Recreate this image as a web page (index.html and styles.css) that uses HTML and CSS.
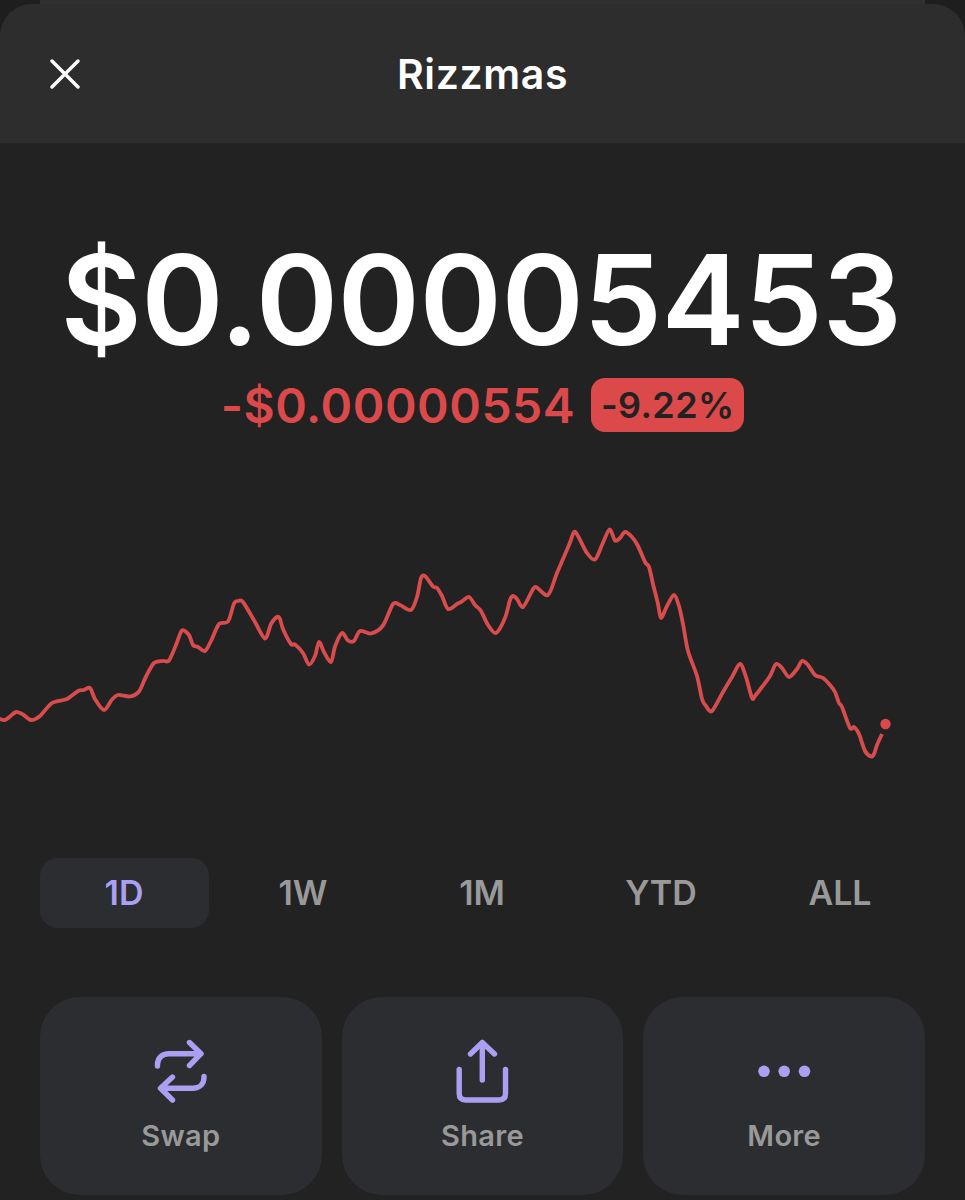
FILE: index.html
```html
<!DOCTYPE html>
<html lang="en">
<head>
  <meta charset="UTF-8" />
  <meta name="viewport" content="width=device-width, initial-scale=1.0"/>
  <title>Rizzmas</title>
  <link rel="stylesheet" href="styles.css">
</head>
<body>
  <div class="peek"></div>
  <div class="sheet">
    <!-- Header -->
    <header class="header">
      <button class="close-btn" aria-label="Close">
        <svg width="30" height="30" viewBox="0 0 30 30"><path d="M2 2L28 28M28 2L2 28"/></svg>
      </button>
      <h1 class="title">Rizzmas</h1>
    </header>

    <!-- Price -->
    <div class="price">$0.00005453</div>
    <div class="change-row">
      <span class="change">-$0.00000554</span>
      <span class="badge">-9.22%</span>
    </div>

    <!-- Chart -->
    <svg class="chart" viewBox="0 500 965 300">
      <path id="chartLine"/>
      <circle cx="885.5" cy="724" r="5.2"/>
    </svg>

    <!-- Time range -->
    <nav class="tabs">
      <button class="tab active">1D</button>
      <button class="tab">1W</button>
      <button class="tab">1M</button>
      <button class="tab">YTD</button>
      <button class="tab">ALL</button>
    </nav>

    <!-- Actions -->
    <div class="actions">
      <button class="action">
        <svg class="icon" viewBox="0 0 64 64">
          <path d="M8.500 27V25.500C8.500 19 13 14.700 20 14.700H52M40.500 3.500L52 14.700L40.500 26.500M55 37.500V38.500C55 45 50.500 49.300 43.500 49.300H12M23.500 38L11.500 49.300L23.500 61"/>
        </svg>
        <span class="label">Swap</span>
      </button>
      <button class="action">
        <svg class="icon" viewBox="0 0 64 64">
          <path d="M32.300 41V3.500M20.500 15L32.300 3.500L44.500 15M9.200 30.500V54.500Q9.200 61 15.500 61H49Q55.500 61 55.500 54.500V30.500"/>
        </svg>
        <span class="label">Share</span>
      </button>
      <button class="action">
        <svg class="icon dots" viewBox="0 0 64 64">
          <circle cx="12" cy="32.300" r="5.8"/><circle cx="32.200" cy="32.300" r="5.8"/><circle cx="52.500" cy="32.300" r="5.8"/>
        </svg>
        <span class="label">More</span>
      </button>
    </div>
  </div>

  <script>
    /* Price points */
    const points=[
      [-4,717],[0,719],[5,720],[10,716.5],[16,712],[23,714.5],[31,720],[40,716],[52,703],[67,699],[78,691],[84,690],
      [90,688],[95,699],[104,710],[112,699.5],[118,695],[130,696.5],[139,691.5],[146,676.5],[154,663],
      [163,661],[169,660.5],[176,645],[182,630.5],[189,635],[193,645],[198,647],[205,651],[211,641],
      [219,624],[228,621.5],[234,603.5],[238,601],[243,602],[255,622],[265,638.5],[271,624],[277,617],
      [280,619],[283,629],[291,644],[295,644.5],[303,653],[309,664.5],[315,656],[319,642],[324,652],
      [331,662],[335,646.5],[342,633],[348,640.5],[354,641],[360,631],[371,633.5],[383,625.5],[393,604],
      [400,605],[411,610],[417,597],[421,578],[425,576],[433,586.5],[437,588],[442,596],[448,609],
      [457,604],[461,602],[469,597],[475,605],[481,611],[488,625],[496,633],[505,618],[510,600],
      [513,596],[517,599],[523,607],[532,591],[536,587],[548,595],[557,573],[569,545],[574,532],
      [578,536],[587,553],[595,559.5],[602,545],[609.5,529.5],[615,540.5],[620,538],[625,532],
      [632,537],[638,546],[645,562],[649,567],[653,584],[658,604],[661,618],[667,606],[674,595],
      [679,606],[683,624],[688,651],[697,676],[702,699],[706,706],[712,711],[723,692],[732,677],
      [740,664],[746,677],[752,698],[755,696],[762,687],[770,676],[776,664],[782,668],[789,677],
      [797,669],[802,661],[808,665],[815,675],[823,678],[830,685],[835,692],[839,703],[842,707],
      [850,728],[854,727],[859,734],[865,751],[871,756.5],[874,754],[877,745],[882,734]
    ];

    /* Smooth line through the points */
    let d="M"+points[0];
    for(let i=0;i<points.length-1;i++){
      const p0=points[i-1]||points[i], p1=points[i], p2=points[i+1], p3=points[i+2]||p2;
      const k=7;
      d+=`C${p1[0]+(p2[0]-p0[0])/k} ${p1[1]+(p2[1]-p0[1])/k} ${p2[0]-(p3[0]-p1[0])/k} ${p2[1]-(p3[1]-p1[1])/k} ${p2[0]} ${p2[1]}`;
    }
    document.getElementById('chartLine').setAttribute('d',d);
  </script>
</body>
</html>
```
FILE: styles.css
```css
*{margin:0;padding:0;box-sizing:border-box;}
html,body{width:100%;height:100vh;font-family:Inter,sans-serif;background:#1e1e1e;overflow:hidden;}
button{background:none;border:none;font-family:inherit;}

/* card behind the sheet */
.peek{height:4px;margin:0 40px;background:#303033;}

.sheet{height:1196px;background:#222;border-radius:32px 32px 0 0;overflow:hidden;}

.header{height:139px;background:#2d2d2d;
  display:grid;
  grid-template-columns:130px 1fr 130px;
  align-items:center;}
.close-btn{display:flex;padding-left:50px;}
.close-btn path{stroke:#fff;stroke-width:3.4;stroke-linecap:round;}
.title{color:#fff;
  text-align:center;
  font-size:41px;
  line-height:48px;
  font-weight:600;
  letter-spacing:0.6px;}

.price{margin-top:82px;
  height:150px;
  line-height:150px;
  padding-right:3px;
  text-align:center;
  white-space:nowrap;
  color:#fff;
  font-size:125px;
  font-weight:600;
  letter-spacing:-0.5px;}

.change-row{display:flex;
  justify-content:center;
  align-items:center;
  gap:16px;
  margin-top:3px;
  height:54px;}
.change{color:#db494a;font-size:48px;font-weight:600;letter-spacing:0.5px;}
.badge{width:153px;
  height:54px;
  line-height:54px;
  text-align:center;
  background:#db494a;
  color:#222;
  font-size:36px;
  font-weight:600;
  letter-spacing:0.4px;
  border-radius:14px;}

.chart{display:block;width:100%;height:300px;margin-top:68px;}
.chart path{fill:none;stroke:#d94c4d;stroke-width:3.8;stroke-linejoin:round;}
.chart circle{fill:#db494a;}

.tabs{display:grid;
  grid-template-columns:repeat(5,169px);
  justify-content:space-between;
  padding:0 40px;
  margin-top:58px;}
.tab{height:70px;
  padding:0 1px 2px 0;
  color:#999;
  font-size:34px;
  font-weight:600;
  border-radius:18px;}
.tab.active{background:#2c2d31;color:#ab9ff2;}

.actions{display:grid;
  grid-template-columns:repeat(3,1fr);
  gap:20px;
  padding:0 40px;
  margin-top:69px;}
.action{height:198px;
  padding-top:42px;
  display:flex;
  flex-direction:column;
  align-items:center;
  background:#2c2d31;
  border-radius:40px;}
.icon{width:64px;height:64px;fill:none;stroke:#ab9ff2;stroke-width:5.4;stroke-linecap:round;stroke-linejoin:round;}
.dots{fill:#ab9ff2;stroke:none;}
.label{margin-top:15px;color:#999;font-size:29px;line-height:36px;font-weight:600;letter-spacing:0.3px;}
```
